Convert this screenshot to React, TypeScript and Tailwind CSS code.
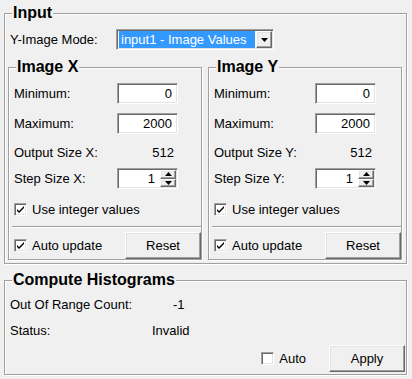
import React from 'react';

const sunken =
  'border border-t-[#a0a0a0] border-l-[#a0a0a0] border-b-white border-r-white shadow-[inset_1px_1px_0_#696969,inset_-1px_-1px_0_#e3e3e3] bg-white';
const raised =
  'border border-t-white border-l-white border-b-[#696969] border-r-[#696969] shadow-[inset_-1px_-1px_0_#a0a0a0,inset_1px_1px_0_#e3e3e3] bg-[#f0f0f0]';
const etched = 'relative border border-[#a0a0a0] shadow-[inset_1px_1px_0_#fff,1px_1px_0_#fff]';

const Title: React.FC<{ text: string }> = ({ text }) => (
  <span className="absolute -top-[10px] left-[7px] px-[1px] bg-[#f0f0f0] text-[16px] leading-[18px] font-bold whitespace-nowrap">
    {text}
  </span>
);

const CheckBox: React.FC<{ checked: boolean }> = ({ checked }) => (
  <div className={`${sunken} w-[13px] h-[13px] flex items-center justify-center shrink-0`}>
    {checked && (
      <svg width="9" height="9" viewBox="0 0 9 9">
        <path d="M1 4 L3 6 L8 1 L8 3 L3 8 L1 6 Z" fill="#000" />
      </svg>
    )}
  </div>
);

const Button: React.FC<{ label: string }> = ({ label }) => (
  <div className={`${raised} w-[76px] h-[27px] flex items-center justify-center`}>{label}</div>
);

const NumberField: React.FC<{ value: string }> = ({ value }) => (
  <div className={`${sunken} w-[61px] h-[21px] flex items-center justify-end pr-[5px]`}>{value}</div>
);

const SpinBox: React.FC<{ value: string }> = ({ value }) => (
  <div className={`${sunken} w-[61px] h-[21px] flex`}>
    <div className="flex-1 flex items-center justify-end pr-[5px]">{value}</div>
    <div className="w-[17px] flex flex-col py-[1px] pr-[1px]">
      <div className={`${raised} flex-1 flex items-center justify-center`}>
        <svg width="7" height="4" viewBox="0 0 7 4">
          <path d="M3.5 0 L7 4 L0 4 Z" fill="#000" />
        </svg>
      </div>
      <div className={`${raised} flex-1 flex items-center justify-center`}>
        <svg width="7" height="4" viewBox="0 0 7 4">
          <path d="M0 0 L7 0 L3.5 4 Z" fill="#000" />
        </svg>
      </div>
    </div>
  </div>
);

const AxisGroup: React.FC<{ axis: string; labelW: string }> = ({ axis, labelW }) => (
  <div className={`${etched} w-[194px] pt-[15px]`}>
    <Title text={`Image ${axis}`} />
    <div className="flex items-center h-[21px] pl-[5px]">
      <span className={labelW}>Minimum:</span>
      <NumberField value="0" />
    </div>
    <div className="flex items-center h-[21px] pl-[5px] mt-[9px]">
      <span className={labelW}>Maximum:</span>
      <NumberField value="2000" />
    </div>
    <div className="flex items-center h-[21px] pl-[5px] mt-[8px]">
      <span className={labelW}>Output Size {axis}:</span>
      <span className="w-[57px] text-right">512</span>
    </div>
    <div className="flex items-center h-[21px] pl-[5px] mt-[5px]">
      <span className={labelW}>Step Size {axis}:</span>
      <SpinBox value="1" />
    </div>
    <div className="flex items-center gap-[5px] h-[21px] pl-[5px] mt-[10px]">
      <CheckBox checked />
      <span>Use integer values</span>
    </div>
    <div className="ml-[3px] mt-[6px] h-[2px] border-t border-t-[#a0a0a0] border-b border-b-white" />
    <div className="flex items-center h-[27px] pl-[5px] mt-[4px]">
      <CheckBox checked />
      <span className="ml-[5px]">Auto update</span>
      <div className="ml-auto">
        <Button label="Reset" />
      </div>
    </div>
  </div>
);

export default function App() {
  return (
    <div className="w-[412px] h-[379px] bg-[#f0f0f0] text-[13px] leading-[16px] text-black font-['Liberation_Sans',Arial,sans-serif] pt-[13px] pl-[4px]">
      <div className={`${etched} w-[403px] h-[251px] pt-[15px]`}>
        <Title text="Input" />
        <div className="flex items-center h-[21px] pl-[5px]">
          <span className="w-[106px]">Y-Image Mode:</span>
          <div className={`${sunken} w-[158px] h-[21px] flex p-[1px] pl-[2px]`}>
            <div className="flex-1 bg-[#3399ff] text-white flex items-center pl-[2px] mr-[1px]">
              input1 - Image Values
            </div>
            <div className={`${raised} w-[16px] flex items-center justify-center`}>
              <svg width="7" height="4" viewBox="0 0 7 4">
                <path d="M0 0 L7 0 L3.5 4 Z" fill="#000" />
              </svg>
            </div>
          </div>
        </div>
        <div className="flex gap-[6px] pl-[3px] mt-[17px]">
          <AxisGroup axis="X" labelW="w-[103px]" />
          <AxisGroup axis="Y" labelW="w-[101px]" />
        </div>
      </div>

      <div className={`${etched} w-[403px] h-[95px] mt-[16px] pt-[13px]`}>
        <Title text="Compute Histograms" />
        <div className="flex items-center h-[21px] pl-[5px]">
          <span className="w-[163px]">Out Of Range Count:</span>
          <span>-1</span>
        </div>
        <div className="flex items-center h-[21px] pl-[5px] mt-[5px]">
          <span className="w-[142px]">Status:</span>
          <span>Invalid</span>
        </div>
        <div className="flex items-center justify-end h-[27px] mt-[4px] pr-[1px]">
          <CheckBox checked={false} />
          <span className="ml-[5px] mr-[23px]">Auto</span>
          <Button label="Apply" />
        </div>
      </div>
    </div>
  );
}
